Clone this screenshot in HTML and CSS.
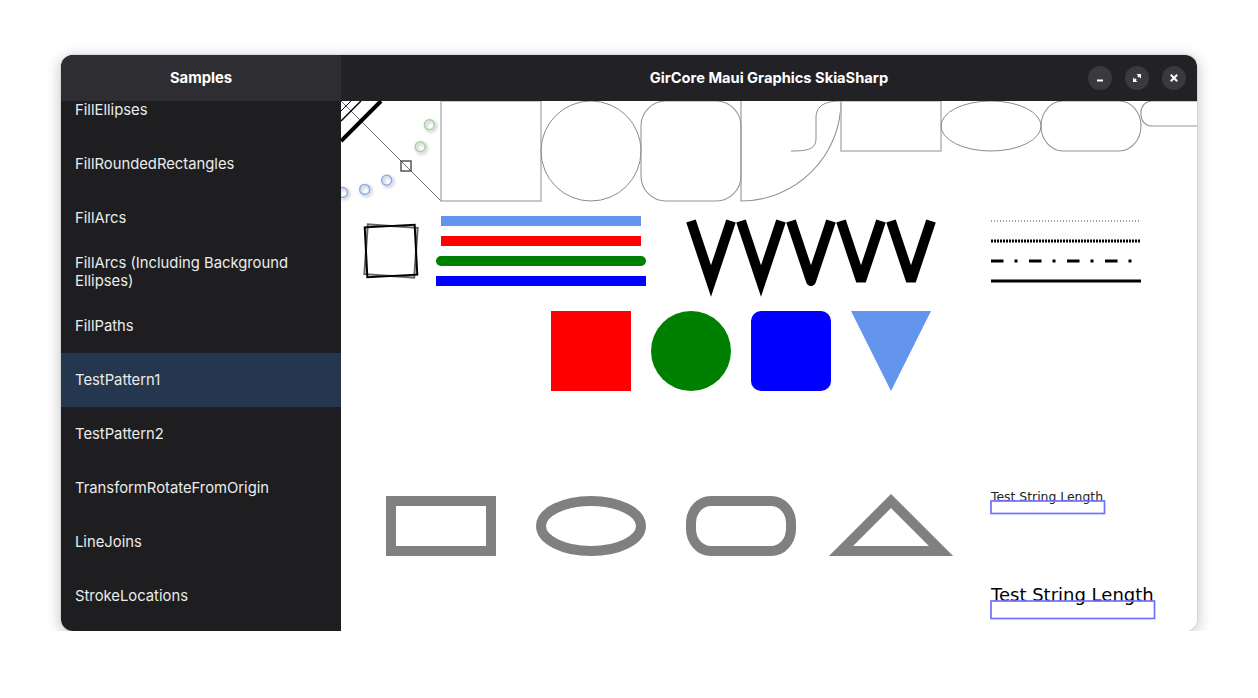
FILE: index.html
```html
<!DOCTYPE html>
<html>
<head>
<meta charset="utf-8">
<link rel="stylesheet" href="styles.css">
</head>
<body>
<div class="window">
  <aside class="sidebar">
    <header class="side-header">Samples</header>
    <div class="list">
      <div class="list-inner">
        <div class="row">FillEllipses</div>
        <div class="row">FillRoundedRectangles</div>
        <div class="row">FillArcs</div>
        <div class="row">FillArcs (Including Background Ellipses)</div>
        <div class="row">FillPaths</div>
        <div class="row sel">TestPattern1</div>
        <div class="row">TestPattern2</div>
        <div class="row">TransformRotateFromOrigin</div>
        <div class="row">LineJoins</div>
        <div class="row">StrokeLocations</div>
      </div>
    </div>
  </aside>
  <main class="content">
    <header class="main-header">
      <span class="spacer"></span>
      <span class="title">GirCore Maui Graphics SkiaSharp</span>
      <div class="controls">
        <span class="btn"><svg width="12" height="12" viewBox="0 0 12 12"><rect x="3" y="7.5" width="6" height="2" fill="#fff"/></svg></span>
        <span class="btn"><svg width="12" height="12" viewBox="0 0 12 12"><path d="M5.5 2 H10 V6.5 Z M2 5.5 V10 H6.5 Z" fill="#fff"/><path d="M7 5 L8.4 3.6 M5 7 L3.6 8.4" stroke="#fff" stroke-width="1.8"/></svg></span>
        <span class="btn"><svg width="12" height="12" viewBox="0 0 12 12"><path d="M2.8 2.8 L9.2 9.2 M9.2 2.8 L2.8 9.2" stroke="#fff" stroke-width="2"/></svg></span>
      </div>
    </header>
    <div class="canvas">
      <svg width="856" height="530" viewBox="0 0 856 530">
        <defs>
          <filter id="sh" x="-100%" y="-100%" width="300%" height="300%">
            <feDropShadow dx="1.5" dy="1.5" stdDeviation="1.6" flood-color="#000" flood-opacity="0.35"/>
          </filter>
        </defs>
        <line x1="0" y1="0" x2="100" y2="100" stroke="#444" stroke-width="0.8"/>
        <line x1="0" y1="10" x2="10" y2="0" stroke="#000" stroke-width="1"/>
        <line x1="0" y1="20" x2="20" y2="0" stroke="#000" stroke-width="1.5"/>
        <line x1="0" y1="40" x2="40" y2="0" stroke="#000" stroke-width="4"/>
        <g fill="none" stroke-width="1.5" filter="url(#sh)">
          <circle cx="88.4" cy="23.7" r="5" stroke="#a6cfa6"/>
          <circle cx="79.2" cy="45.7" r="5" stroke="#a6cfa6"/>
          <circle cx="45.7" cy="79.2" r="5" stroke="#8fa8f2"/>
          <circle cx="23.7" cy="88.4" r="5" stroke="#8fa8f2"/>
          <circle cx="1.5" cy="91.5" r="5" stroke="#8fa8f2"/>
        </g>
        <rect x="60" y="60" width="10" height="10" fill="none" stroke="#555" stroke-width="1.5"/>
        <g fill="none">
          <rect x="100" y="0" width="100" height="100" stroke="#b5b5b5" stroke-width="1.5"/>
          <circle cx="250" cy="50" r="50" stroke="#8a8a8a" stroke-width="1"/>
          <rect x="300" y="0" width="100" height="100" rx="25" stroke="#959595" stroke-width="1.1"/>
          <path d="M400 0 V100 A100 100 0 0 0 500 0" stroke="#959595" stroke-width="1.1"/>
          <path d="M450 50 C468 50 475 48 475 37 L475 17 C475 4 485 0 500 0" stroke="#8a8a8a" stroke-width="1"/>
          <rect x="500" y="0" width="100" height="50" stroke="#b5b5b5" stroke-width="1.5"/>
          <ellipse cx="650" cy="25" rx="50" ry="25" stroke="#8a8a8a" stroke-width="1"/>
          <rect x="700" y="0" width="100" height="50" rx="22" ry="25" stroke="#959595" stroke-width="1.1"/>
          <rect x="800" y="0" width="100" height="25" rx="11" stroke="#959595" stroke-width="1.1"/>
        </g>
        <rect x="25" y="125" width="50" height="50" fill="none" stroke="#666" stroke-width="2" transform="rotate(4 50 150)"/>
        <rect x="25" y="125" width="50" height="50" fill="none" stroke="#000" stroke-width="2" transform="rotate(-3 50 150)"/>
        <line x1="100" y1="120" x2="300" y2="120" stroke="#6495ed" stroke-width="10"/>
        <line x1="100" y1="140" x2="300" y2="140" stroke="#ff0000" stroke-width="10"/>
        <line x1="100" y1="160" x2="300" y2="160" stroke="#008000" stroke-width="10" stroke-linecap="round"/>
        <line x1="100" y1="180" x2="300" y2="180" stroke="#0000ff" stroke-width="10" stroke-linecap="square"/>
        <g fill="none" stroke="#000" stroke-width="10">
          <polyline points="350,120 370,180 390,120" stroke-linejoin="miter" stroke-miterlimit="10"/>
          <polyline points="400,120 420,180 440,120" stroke-linejoin="miter" stroke-miterlimit="10"/>
          <polyline points="450,120 470,180 490,120" stroke-linejoin="round"/>
          <polyline points="500,120 520,180 540,120" stroke-linejoin="bevel"/>
          <polyline points="550,120 570,180 590,120" stroke-linejoin="bevel"/>
        </g>
        <line x1="650" y1="120" x2="800" y2="120" stroke="#444" stroke-width="1.2" stroke-dasharray="1 2"/>
        <line x1="650" y1="140" x2="800" y2="140" stroke="#000" stroke-width="3" stroke-dasharray="2 1"/>
        <line x1="650" y1="160" x2="800" y2="160" stroke="#000" stroke-width="3" stroke-dasharray="12.5 11 3 11.5"/>
        <line x1="650" y1="180" x2="800" y2="180" stroke="#000" stroke-width="3"/>
        <rect x="210" y="210" width="80" height="80" fill="#ff0000"/>
        <circle cx="350" cy="250" r="40" fill="#008000"/>
        <rect x="410" y="210" width="80" height="80" rx="10" fill="#0000ff"/>
        <polygon points="510,210 590,210 550,290" fill="#6495ed"/>
        <g fill="none" stroke="#808080" stroke-width="10">
          <rect x="50" y="400" width="100" height="50"/>
          <ellipse cx="250" cy="425" rx="50" ry="25"/>
          <rect x="350" y="400" width="100" height="50" rx="20" ry="22"/>
          <polygon points="500,450 550,400 600,450" stroke-linejoin="miter"/>
        </g>
        <text x="650" y="400" class="t-small">Test String Length</text>
        <rect x="650" y="400" width="113.5" height="12.5" fill="none" stroke="#7070ff" stroke-width="1.7"/>
        <text x="650" y="499.5" class="t-large">Test String Length</text>
        <rect x="650" y="500" width="163.5" height="17.5" fill="none" stroke="#7070ff" stroke-width="1.7"/>
      </svg>
    </div>
  </main>
</div>
</body>
</html>
```
FILE: styles.css
```css
html, body {
  margin: 0;
  background: #ffffff;
}
body {
  padding: 55px 0 0 61px;
  font-family: Inter, "Noto Sans", sans-serif;
}
.window {
  width: 1136px;
  height: 576px;
  display: flex;
  border-radius: 12px;
  overflow: hidden;
  box-shadow: 0 3px 14px 2px rgba(0, 0, 0, 0.2), 0 0 0 1px rgba(0, 0, 0, 0.06);
}
.sidebar {
  width: 280px;
  flex: none;
  display: flex;
  flex-direction: column;
  background: #1e1e20;
}
.side-header {
  height: 45px;
  padding-bottom: 1px;
  flex: none;
  background: #2e2e32;
  color: #ffffff;
  font-weight: 700;
  font-size: 14.8px;
  display: flex;
  align-items: center;
  justify-content: center;
}
.list {
  flex: 1;
  overflow: hidden;
}
.list-inner {
  margin-top: -18px;
}
.row {
  height: 54px;
  box-sizing: border-box;
  display: flex;
  align-items: center;
  padding: 0 14px;
  color: #ececec;
  font-size: 14.8px;
  line-height: 18px;
}
.row.sel {
  background: #24374f;
}
.content {
  flex: 1;
  display: flex;
  flex-direction: column;
  min-width: 0;
}
.main-header {
  height: 45px;
  padding-bottom: 1px;
  flex: none;
  background: #222226;
  display: grid;
  grid-template-columns: 1fr auto 1fr;
  align-items: center;
  color: #ffffff;
  font-weight: 700;
  font-size: 14.67px;
}
.controls {
  justify-self: end;
  display: flex;
  gap: 13px;
  padding-right: 11px;
}
.btn {
  width: 24px;
  height: 24px;
  border-radius: 50%;
  background: #3a3a3e;
  display: flex;
  align-items: center;
  justify-content: center;
}
.btn svg {
  display: block;
}
.canvas {
  flex: 1;
  background: #ffffff;
  overflow: hidden;
}
.canvas svg {
  display: block;
}
.t-small {
  font-family: "DejaVu Sans", sans-serif;
  font-size: 12.4px;
  fill: #222222;
}
.t-large {
  font-family: "DejaVu Sans", sans-serif;
  font-size: 18px;
  fill: #000000;
}
```
